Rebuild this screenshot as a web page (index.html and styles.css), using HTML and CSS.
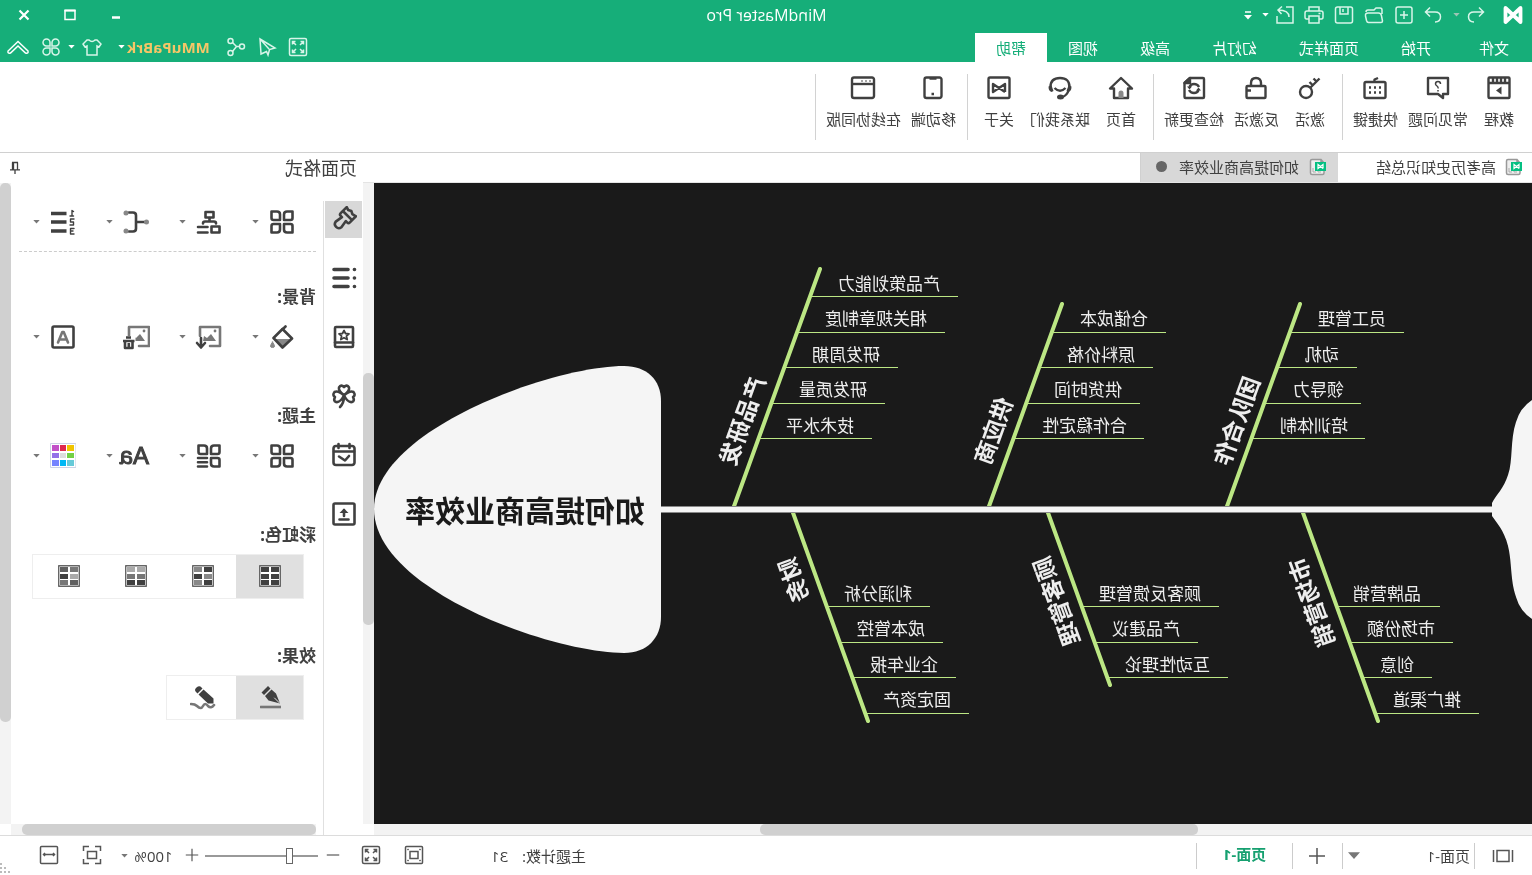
FILE: index.html
```html
<!DOCTYPE html>
<html lang="zh-CN">
<head>
<meta charset="utf-8">
<title>MindMaster Pro</title>
<link rel="stylesheet" href="styles.css">
</head>
<body>
<svg class="sprite" aria-hidden="true">
  <symbol id="caret" viewBox="0 0 8 5"><path d="M0 0h8L4 4.500z" fill="currentColor"/></symbol>
  <symbol id="logo" viewBox="0 0 22 20"><path d="M3.500 17V3l15 14V3l-15 14" fill="none" stroke="#fff" stroke-width="3.800" stroke-linejoin="round" stroke-linecap="round"/></symbol>
  <symbol id="undo" viewBox="0 0 20 20"><path d="M7 2.500L2.500 7 7 11.500M2.500 7H12c3.500 0 5.500 1.800 5.500 4.800S15.500 17 12 17"/></symbol>
  <symbol id="redo" viewBox="0 0 20 20"><path d="M13 2.500L17.500 7 13 11.500M17.500 7H8c-3.500 0-5.500 1.800-5.500 4.800S4.500 17 8 17"/></symbol>
  <symbol id="new" viewBox="0 0 20 20"><rect x="2" y="2" width="16" height="16" rx="2"/><path d="M10 6v8M6 10h8"/></symbol>
  <symbol id="folder" viewBox="0 0 20 20"><path d="M2 9V5q0-2 2-2h4l2 2h6q2 0 2 2M1.500 16l1-5q.5-3 3-3h10.500q3 0 2.500 3l-1 4.500q-.5 2-2 2H3q-1.500 0-1.500-1.500z"/></symbol>
  <symbol id="save" viewBox="0 0 20 20"><rect x="1.500" y="2" width="17" height="16" rx="2"/><path d="M6 2v7h8V2M11 4v3"/></symbol>
  <symbol id="print" viewBox="0 0 20 20"><path d="M5 6V2h10v4M5 14H2.500q-1.500 0-1.500-2V8q0-2 2-2h14q2 0 2 2v4q0 2-1.500 2H15M5 11h10v7H5zM3.500 8.500h2"/></symbol>
  <symbol id="export" viewBox="0 0 20 20"><path d="M9 2H2v16h16v-7M6 12c0-5 4-7 11-7M13 1.500L17 5l-3.500 4"/></symbol>
  <symbol id="quickbar" viewBox="0 0 8 10"><path d="M1 2h6" stroke="#fff" stroke-width="1.500"/><path d="M0 5h8L4 9.500z" fill="#fff"/></symbol>
  <symbol id="min" viewBox="0 0 14 14"><path d="M3 9.500h8" stroke-width="2.500"/></symbol>
  <symbol id="max" viewBox="0 0 14 14"><path d="M2 2.500h10v9H2z"/><path d="M1.500 2.500h11" stroke-width="2"/></symbol>
  <symbol id="close" viewBox="0 0 14 14"><path d="M2.500 2.500l9 9M11.500 2.500l-9 9" stroke-width="2.200"/></symbol>
  <symbol id="expand" viewBox="0 0 20 20"><rect x="1.500" y="1.500" width="17" height="17" rx="1.500"/><path d="M8 8L4.500 4.500M4.500 7.500v-3h3M12 8l3.500-3.500M12.500 4.500h3v3M8 12l-3.500 3.500M4.500 12.500v3h3M12 12l3.500 3.500M12.500 15.500h3v-3"/></symbol>
  <symbol id="send" viewBox="0 0 20 20"><path d="M17 2L2 11l5.500 1.500L9 18l1.500-3.500L16 17zM17 2L8 12"/></symbol>
  <symbol id="share" viewBox="0 0 20 20"><circle cx="4" cy="9.500" r="2.500"/><circle cx="15.500" cy="4" r="2.500"/><circle cx="15.500" cy="16" r="2.500"/><path d="M6.500 9.500h3l4-4M9.500 9.500l4 5"/></symbol>
  <symbol id="shirt" viewBox="0 0 20 20"><path d="M7 3q3 3 6 0l2 0 4 4-2 3-2-1v9H5V9l-2 1-2-3 4-4z"/></symbol>
  <symbol id="clover4" viewBox="0 0 20 20"><path d="M9 9H5.500A3.500 3.500 0 1 1 9 5.500zM11 9V5.500A3.500 3.500 0 1 1 14.500 9zM9 11v3.500A3.500 3.500 0 1 1 5.500 11zM11 11h3.500A3.500 3.500 0 1 1 11 14.500z"/></symbol>
  <symbol id="chevron" viewBox="0 0 24 20"><path d="M2 14l10-9.500L22 14q.5 3-2.500 2L12 9l-7.500 7Q1.500 17 2 14z"/></symbol>

  <symbol id="film" viewBox="0 0 24 24"><rect x="1.500" y="1.500" width="21" height="20.500" rx="1"/><path d="M2 7h20M6 2v5M10 2v5M14 2v5M18 2v5"/><path d="M9.500 10.500l5.500 4-5.500 4z" fill="currentColor" stroke="none"/></symbol>
  <symbol id="faq" viewBox="0 0 24 24"><path d="M2 2h20v16h-10l-5 4v-4H2z"/><path d="M9.500 8q0-2.500 2.500-2.500T14.500 8q0 1-1.500 2t-1 2.500M12 14v1.500" stroke-width="1.500"/></symbol>
  <symbol id="keyboard" viewBox="0 0 24 24"><rect x="1.500" y="6" width="21" height="16" rx="1.500"/><path d="M12.500 6V3.500L9 2M6 11.500h2M11 11.500h2M16 11.500h2M6 16.500h2M11 16.500h2M16 16.500h2"/></symbol>
  <symbol id="key" viewBox="0 0 24 24"><circle cx="16" cy="16" r="6"/><path d="M11.500 11.500L2.500 2.500M9 9.500l3.500-3.500M5 6l3.500-3.500"/></symbol>
  <symbol id="lock" viewBox="0 0 24 24"><rect x="2.500" y="10" width="19" height="12" rx="1"/><path d="M7 10V7q0-5 5-5t5 5v3M17 14.500h4"/></symbol>
  <symbol id="update" viewBox="0 0 24 24"><path d="M3 2h13l5.500 5v14q0 1-1 1H3q-1 0-1-1V3q0-1 1-1z"/><path d="M16 2v5h5.500z" fill="currentColor"/><path d="M7 11q1.500-3 5-3t4.500 3M17 14q-1.500 3-5 3t-4.500-3"/><path d="M14 10.500h5l-2.500 3zM5 14.500h5l-2.500-3z" fill="currentColor" stroke="none"/></symbol>
  <symbol id="home" viewBox="0 0 26 24"><path d="M2 12.500L13 2l11 10.500h-4V22H6v-9.500z"/><path d="M10.500 22v-5q0-2.500 2.500-2.500t2.500 2.500v5z" fill="#888" stroke="none"/></symbol>
  <symbol id="support" viewBox="0 0 26 24"><path d="M3.500 11q0-9 9.500-9t9.500 9M4 13q2 7 7 8M7.500 12q5.500 5.500 11 0"/><path d="M1.500 10.500l3-1 2 5.500-2 1q-3-1-3-5.500zM24.500 10.500l-3-1-2 5.500 2 1q3-1 3-5.500z" fill="currentColor" stroke="none"/><ellipse cx="12.500" cy="21" rx="3.500" ry="2.500" fill="currentColor" stroke="none"/></symbol>
  <symbol id="about" viewBox="0 0 24 24"><rect x="1.500" y="1.500" width="21" height="20.500" rx="1.500"/><path d="M6 16V8l12 8V8L6 16"/></symbol>
  <symbol id="phone" viewBox="0 0 24 24"><rect x="3.500" y="1.500" width="17" height="20.500" rx="2"/><path d="M8.500 2.500h7M11 18h2.500"/></symbol>
  <symbol id="browser" viewBox="0 0 26 24"><rect x="2" y="1.500" width="22" height="20.500" rx="2"/><path d="M2 8h22"/><path d="M5 5h2M9 5h2M13 5h2" stroke="#888" stroke-width="1.500"/></symbol>

  <symbol id="doc" viewBox="0 0 18 18"><path d="M6 1.500h9q1.500 0 1.500 1.500v12q0 1.500-1.500 1.500H4.500Q3 16.500 3 15V5zM6 1.500V5H3" fill="#eee" stroke="#999" stroke-width="1.500"/><path d="M6 14h3v-2M11 14h3v-4" fill="none" stroke="#aaa"/><rect x="1" y="4" width="11" height="9" fill="#05c082"/><path d="M4 10.500v-4l5 4v-4l-5 4" fill="none" stroke="#fff" stroke-width="1.200"/></symbol>
  <symbol id="pin" viewBox="0 0 12 14"><path d="M3 1.500h6M3.500 1.500v7M8.500 1.500v7M7.500 1.500v7M1 8.800h10M6 9v4"/></symbol>

  <symbol id="brush" viewBox="0 0 26 26"><g transform="translate(11 11) rotate(-45)"><path d="M-6.500-7.500l4 1 3-1.500 3 1.500 3-1V1q0 2-2 2H2.800l1.200 7.500Q3.500 14 0 14t-4-3.500L-2.800 3h-1.700q-2 0-2-2zM-6.500-2h13"/></g></symbol>
  <symbol id="outline" viewBox="0 0 26 26"><path d="M9 4.500h14M9 13h14M9 21.500h14M2.500 4.500h.1M2.500 13h.1M2.500 21.500h.1" stroke-width="3.600"/></symbol>
  <symbol id="album" viewBox="0 0 26 26"><rect x="4" y="3" width="18" height="20" rx="1"/><path d="M4 18.500h18"/><path d="M13 6.500l1.500 3 3.500.3-2.600 2.300.8 3.400-3.200-1.800-3.200 1.800.8-3.400L8 9.800l3.500-.3z" stroke-width="1.800"/></symbol>
  <symbol id="clover" viewBox="0 0 26 26"><path d="M13 12Q7 8 8 4.500 10 1 13 4q3-3 5 .5Q19 8 13 12zM13 12.500Q7 7 3.500 9 1 12 4 14q-2 4 1 5 4 1 8-6.500zM13 12.500Q19 7 22.500 9 25 12 22 14q2 4-1 5-4 1-8-6.500zM13 13q0 7 4 11"/></symbol>
  <symbol id="calendar" viewBox="0 0 26 26"><rect x="2.500" y="4" width="21" height="19" rx="2.500"/><path d="M3 9.500h20M7.500 2v4M18.500 2v4M8 14l4 4.500 6-4"/></symbol>
  <symbol id="upload" viewBox="0 0 26 26"><rect x="2.500" y="2.500" width="21" height="21" rx="1.500"/><path d="M13 15V9M8.500 18.500h9"/><path d="M8.500 12L13 7.500l4.500 4.500z" fill="currentColor" stroke="none"/></symbol>

  <symbol id="layout4" viewBox="0 0 26 26"><path d="M2.500 2.500H8q3 0 3 3V11H4.500q-2 0-2-2zM23.500 2.500H18q-3 0-3 3V11h6.500q2 0 2-2zM2.500 23.500V17q0-2 2-2H11v5.500q0 3-3 3zM15 15h6.500q2 0 2 2v6.500H18q-3 0-3-3z"/></symbol>
  <symbol id="structure" viewBox="0 0 26 26"><rect x="8.500" y="3" width="8" height="5.500"/><path d="M12.500 9v3M6 14.500q0-2 2-2h9q2 0 2 2"/><rect x="2.500" y="17.500" width="8" height="6"/><path d="M14.500 18h9.500M14.500 23.500h9.500"/></symbol>
  <symbol id="connector" viewBox="0 0 26 26"><path d="M2 13h10M20 3.500h-4q-3 0-3 3v13q0 3 3 3h4"/><g fill="#888" stroke="none"><circle cx="2.500" cy="13" r="2.500"/><circle cx="23" cy="4" r="2.500"/><circle cx="23" cy="22" r="2.500"/></g></symbol>
  <symbol id="numbering" viewBox="0 0 26 26"><path d="M9.500 4.500H25M9.500 13H25M9.500 22H25" stroke-width="3.600" stroke-linecap="butt"/><path d="M2.500 2.500L4 1.500V7M2.500 7H6M2 10h3.500v3H2.500v3H6M2 19.500h3.500V25H2M3 22h2.500" stroke-width="1.400"/></symbol>
  <symbol id="bucket" viewBox="0 0 26 26"><path d="M9.500 2.500l3 3"/><path d="M5 15h16l-8 8z" fill="#888" stroke="none"/><path d="M12.500 5L3 14.500l9.500 9 9-9.500z"/><path d="M22.500 18q4 5.500 0 5.500t0-5.500z" fill="#888" stroke="#888" stroke-width="1"/></symbol>
  <symbol id="picture" viewBox="0 0 28 26"><path d="M13 22H3V3h20v9" stroke="#777"/><path d="M7 17l5-7 4 4 3-2 1 5z" fill="#777" stroke="none"/><circle cx="8" cy="7" r="1.400" fill="#777" stroke="none"/></symbol>
  <symbol id="setpic" viewBox="0 0 28 26"><use href="#picture" width="28" height="26"/><path d="M22 14v9M18 19l4 4.500 4-4.500"/></symbol>
  <symbol id="delpic" viewBox="0 0 28 26"><use href="#picture" x="-2" width="28" height="26"/><path d="M14.500 12H28v14H14.500z" fill="#fff" stroke="none"/><path d="M15.500 17H27M19 13.500h5M17.500 18v6H25v-6M21.200 19v4" stroke-linecap="butt"/></symbol>
  <symbol id="watermark" viewBox="0 0 26 26"><rect x="2.500" y="2.500" width="21" height="21" rx="1.500"/><path d="M8 18.500L12.300 8h1.400L18 18.500M9.500 15.500h7" stroke="#777"/></symbol>
  <symbol id="themelist" viewBox="0 0 26 26"><path d="M2.500 2.500H8q3 0 3 3V11H4.500q-2 0-2-2zM23.500 2.500H18q-3 0-3 3V11h6.500q2 0 2-2zM2.500 23.500V17q0-2 2-2H11v5.500q0 3-3 3zM15 15h9M15 19.200h9M15 23.500h9"/></symbol>
  <symbol id="palette" viewBox="0 0 26 26"><rect x=".5" y=".5" width="25" height="24" fill="#fff" stroke="#ccd3e6" stroke-width="1"/><g stroke="none"><path fill="#f0c400" d="M2 2h7v6H2z"/><path fill="#e0284e" d="M10 2h6v6h-6z"/><path fill="#c250c8" d="M17 2h7v6h-7z"/><path fill="#72d045" d="M2 10h7v5H2z"/><path fill="#ddd" d="M10 10h6v5h-6z"/><path fill="#9370e8" d="M17 10h7v5h-7z"/><path fill="#66cad8" d="M2 17h7v6H2z"/><path fill="#00b8f5" d="M10 17h6v6h-6z"/><path fill="#7684ff" d="M17 17h7v6h-7z"/></g></symbol>
  <symbol id="rain1" viewBox="0 0 22 22"><rect x=".7" y=".7" width="20.600" height="20.600" fill="#fff" stroke="#666" stroke-width="1.400"/><path d="M2 2h8v5H2zM12 2h8v5h-8zM2 9h8v5H2zM12 9h8v5h-8zM2 15h8v5H2zM12 15h8v5h-8z" fill="#404040" stroke="none"/></symbol>
  <symbol id="rain2" viewBox="0 0 22 22"><rect x=".7" y=".7" width="20.600" height="20.600" fill="#fff" stroke="#666" stroke-width="1.400"/><path d="M2 2h8v5H2zM12 9h8v5h-8zM2 15h8v5H2z" fill="#404040" stroke="none"/><path d="M12 2h8v5h-8zM2 9h8v5H2zM12 15h8v5h-8z" fill="#888" stroke="none"/></symbol>
  <symbol id="rain3" viewBox="0 0 22 22"><rect x=".7" y=".7" width="20.600" height="20.600" fill="#fff" stroke="#666" stroke-width="1.400"/><path d="M2 2h8v5H2zM12 2h8v5h-8z" fill="#aaa" stroke="none"/><path d="M2 9h8v5H2zM12 9h8v5h-8z" fill="#777" stroke="none"/><path d="M2 15h8v5H2zM12 15h8v5h-8z" fill="#404040" stroke="none"/></symbol>
  <symbol id="rain4" viewBox="0 0 22 22"><rect x=".7" y=".7" width="20.600" height="20.600" fill="#fff" stroke="#666" stroke-width="1.400"/><path d="M2 2h8v5H2zM12 15h8v5h-8z" fill="#777" stroke="none"/><path d="M2 9h8v5H2z" fill="#aaa" stroke="none"/><path d="M12 2h8v5h-8zM2 15h8v5H2z" fill="#606060" stroke="none"/><path d="M12 9h8v5h-8z" fill="#404040" stroke="none"/></symbol>
  <symbol id="pen" viewBox="0 0 26 26"><path d="M2 23h21" stroke="#777" stroke-linecap="butt"/><path d="M15 2l6.500 6.500L19 11l-6.500-6.500zM11.500 5.500L18 12l-3.500 4.500L3 19.500l4-10z" fill="currentColor" stroke="none"/><path d="M3.500 19l5-5" stroke="#e0e0e0" stroke-width="1"/></symbol>
  <symbol id="pencil" viewBox="0 0 26 26"><path d="M2 21q3 4 6 1 3-4 5 0t6 0q2-2 6-2" stroke="#777"/><path d="M14.500 3.500q2-2.500 5 0t0 5l-1 1-5-5zM12.500 5.500l5 5L8 19.500H2.500v-5z" fill="currentColor" stroke="none"/></symbol>

  <symbol id="slides" viewBox="0 0 22 16"><rect x="5" y="2.500" width="12" height="11"/><path d="M1.500 2v12M20.500 2v12"/></symbol>
  <symbol id="plus" viewBox="0 0 18 18"><path d="M9 1v16M1 9h16"/></symbol>
  <symbol id="minus" viewBox="0 0 18 18"><path d="M1 9h16"/></symbol>
  <symbol id="fitpage" viewBox="0 0 20 20"><rect x="1.500" y="1.500" width="17" height="17" rx="1"/><rect x="6" y="6.500" width="8" height="7"/><path d="M3.500 4l1 1M16.500 4l-1 1M3.500 16l1-1M16.500 16l-1-1"/></symbol>
  <symbol id="center" viewBox="0 0 20 20"><path d="M1.500 6V1.500H7M13 1.500h5.500V6M18.500 14v4.500H13M7 18.500H1.500V14"/><rect x="5.500" y="6.500" width="9" height="7"/></symbol>
  <symbol id="fitwidth" viewBox="0 0 20 20"><rect x="1.500" y="1.500" width="17" height="17" rx="1"/><path d="M4.500 9.500h11M6 8l-1.500 1.500L6 11M14 8l1.500 1.500L14 11"/></symbol>
</svg>

<div class="app">
  <header class="titlebar">
    <div class="quick">
      <svg class="logo"><use href="#logo"/></svg>
      <button class="tool undo" aria-label="撤销"><svg><use href="#undo"/></svg></button>
      <button class="drop dim" aria-label="撤销列表"><svg><use href="#caret"/></svg></button>
      <button class="tool redo" aria-label="重做"><svg><use href="#redo"/></svg></button>
      <button class="tool" aria-label="新建"><svg><use href="#new"/></svg></button>
      <button class="tool" aria-label="打开"><svg><use href="#folder"/></svg></button>
      <button class="tool" aria-label="保存"><svg><use href="#save"/></svg></button>
      <button class="tool" aria-label="打印"><svg><use href="#print"/></svg></button>
      <button class="tool last" aria-label="导出"><svg><use href="#export"/></svg></button>
      <button class="drop" aria-label="导出列表"><svg><use href="#caret"/></svg></button>
      <button class="drop custom" aria-label="自定义"><svg class="quickbar"><use href="#quickbar"/></svg></button>
    </div>
    <h1 class="apptitle">MindMaster Pro</h1>
    <div class="winbtns">
      <button aria-label="最小化"><svg><use href="#min"/></svg></button>
      <button aria-label="最大化"><svg><use href="#max"/></svg></button>
      <button aria-label="关闭"><svg><use href="#close"/></svg></button>
    </div>
  </header>

  <nav class="menubar">
    <div class="menus">
      <button class="menu file">文件</button>
      <button class="menu">开始</button>
      <button class="menu">页面样式</button>
      <button class="menu">幻灯片</button>
      <button class="menu">高级</button>
      <button class="menu">视图</button>
      <button class="menu active">帮助</button>
    </div>
    <div class="account">
      <button class="tool" aria-label="全屏"><svg><use href="#expand"/></svg></button>
      <button class="tool" aria-label="发送"><svg><use href="#send"/></svg></button>
      <button class="tool" aria-label="分享"><svg><use href="#share"/></svg></button>
      <button class="user">MMuPaBrk<svg class="caret"><use href="#caret"/></svg></button>
      <button class="tool" aria-label="皮肤"><svg><use href="#shirt"/></svg></button>
      <button class="drop" aria-label="皮肤列表"><svg><use href="#caret"/></svg></button>
      <button class="tool apps" aria-label="应用"><svg><use href="#clover4"/></svg></button>
      <button class="tool collapse" aria-label="收起功能区"><svg><use href="#chevron"/></svg></button>
    </div>
  </nav>

  <section class="ribbon">
    <div class="group">
      <button><svg><use href="#film"/></svg>教程</button>
      <button><svg><use href="#faq"/></svg>常见问题</button>
      <button><svg><use href="#keyboard"/></svg>快捷键</button>
    </div>
    <div class="group">
      <button><svg><use href="#key"/></svg>激活</button>
      <button><svg><use href="#lock"/></svg>反激活</button>
      <button><svg><use href="#update"/></svg>检查更新</button>
    </div>
    <div class="group">
      <button><svg><use href="#home"/></svg>首页</button>
      <button><svg><use href="#support"/></svg>联系我们</button>
      <button><svg><use href="#about"/></svg>关于</button>
    </div>
    <div class="group">
      <button><svg><use href="#phone"/></svg>移动端</button>
      <button><svg><use href="#browser"/></svg>在线协同版</button>
    </div>
  </section>

  <main class="work">
    <section class="docs">
      <div class="doctabs">
        <button class="doctab"><svg><use href="#doc"/></svg>高考历史知识总结</button>
        <button class="doctab active"><svg><use href="#doc"/></svg>如何提高商业效率<span class="dirty"></span></button>
      </div>
      <div class="stage">
        <div class="canvas">
          <svg class="map" viewBox="0 183 1158 641" width="1158" height="641">
            <path class="paper" d="M0 400Q12 408 16 422C22 440 19 460 24 475 28 488 36 495 40 503V516C36 522 28 530 24 546 20 562 22 580 16 597Q12 611 0 619z"/>
            <path class="paper" d="M871 401C871 380 885 366 908 366 980 366 1158 430 1158 509 1158 590 980 653 908 653 885 653 871 638 871 617z"/>
            <g class="bone">
              <path d="M232 304L306 509M470 304L544 509M712 269L799 509M230 510L154 721M485 510L422 685M740 510L664 721"/>
            </g>
            <path class="spine-edge" d="M40 509.500H871"/>
            <path class="spine" d="M38 509.500H873"/>
            <g class="twig">
              <path d="M128 332.500H241M175 367.500H253M171 403.500H266M167 438.500H279"/>
              <path d="M366 332.500H479M379 367.500H491M392 403.500H504M388 438.500H517"/>
              <path d="M574 296.500H721M587 332.500H734M634 367.500H746M647 403.500H759M660 438.500H772"/>
              <path d="M92 606.500H195M79 642.500H182M100 677.500H169M53 713.500H156"/>
              <path d="M313 606.500H450M334 642.500H437M304 677.500H424"/>
              <path d="M602 606.500H705M589 642.500H692M576 677.500H679M563 713.500H666"/>
            </g>
            <g class="topic">
              <text x="146" y="325">员工管理</text><text x="193" y="361">动机</text><text x="188" y="396">领导力</text><text x="184" y="432">培训体制</text>
              <text x="384" y="325">仓储成本</text><text x="397" y="361">原料价格</text><text x="410" y="396">供货时间</text><text x="405" y="432">合作稳定性</text>
              <text x="592" y="290">产品策划能力</text><text x="605" y="325">相关规章制度</text><text x="652" y="361">研发周期</text><text x="665" y="396">研发质量</text><text x="678" y="432">技术水平</text>
              <text x="111" y="600">品牌营销</text><text x="97" y="635">市场份额</text><text x="118" y="671">创意</text><text x="71" y="706">推广渠道</text>
              <text x="331" y="600">顾客反馈管理</text><text x="352" y="635">产品建议</text><text x="322" y="671">互动性理论</text>
              <text x="620" y="600">利润分析</text><text x="607" y="635">成本管控</text><text x="594" y="671">企业年报</text><text x="581" y="706">固定资产</text>
            </g>
            <g class="branch">
              <text transform="translate(295 421) rotate(70)" y="8">团队合作</text>
              <text transform="translate(538 431) rotate(70)" y="8">供应商</text>
              <text transform="translate(789 421) rotate(70)" y="8">产品研发</text>
              <text transform="translate(220 602) rotate(110)" y="8">市场营销</text>
              <text transform="translate(475 601) rotate(110)" y="8">顾客管理</text>
              <text transform="translate(738 580) rotate(110)" y="8">财务</text>
            </g>
            <text class="root" x="887" y="522">如何提高商业效率</text>
          </svg>
        </div>
        <div class="vscroll mapv"><i></i></div>
        <div class="hscroll maph"><i></i></div>
      </div>
    </section>

    <aside class="panel">
      <div class="panelhead"><h2>页面格式</h2><button aria-label="固定面板"><svg><use href="#pin"/></svg></button></div>
      <div class="panelbody">
        <div class="side">
          <button class="active" aria-label="页面格式"><svg><use href="#brush"/></svg></button>
          <button aria-label="大纲"><svg><use href="#outline"/></svg></button>
          <button aria-label="图标"><svg><use href="#album"/></svg></button>
          <button aria-label="剪贴画"><svg><use href="#clover"/></svg></button>
          <button aria-label="任务"><svg><use href="#calendar"/></svg></button>
          <button aria-label="附件"><svg><use href="#upload"/></svg></button>
        </div>
        <div class="format">
          <div class="row first">
            <button aria-label="布局"><svg><use href="#layout4"/></svg><svg class="caret"><use href="#caret"/></svg></button>
            <button aria-label="结构"><svg><use href="#structure"/></svg><svg class="caret"><use href="#caret"/></svg></button>
            <button aria-label="连接线"><svg><use href="#connector"/></svg><svg class="caret"><use href="#caret"/></svg></button>
            <button aria-label="编号"><svg><use href="#numbering"/></svg><svg class="caret"><use href="#caret"/></svg></button>
          </div>
          <h3>背景:</h3>
          <div class="row">
            <button aria-label="背景颜色"><svg><use href="#bucket"/></svg><svg class="caret"><use href="#caret"/></svg></button>
            <button aria-label="背景图片"><svg class="wide"><use href="#setpic"/></svg><svg class="caret"><use href="#caret"/></svg></button>
            <button aria-label="移除图片"><svg class="wide"><use href="#delpic"/></svg></button>
            <button aria-label="水印"><svg><use href="#watermark"/></svg><svg class="caret"><use href="#caret"/></svg></button>
          </div>
          <h3>主题:</h3>
          <div class="row">
            <button aria-label="主题"><svg><use href="#layout4"/></svg><svg class="caret"><use href="#caret"/></svg></button>
            <button aria-label="主题样式"><svg><use href="#themelist"/></svg><svg class="caret"><use href="#caret"/></svg></button>
            <button class="fonts"><span>Aa</span><svg class="caret"><use href="#caret"/></svg></button>
            <button aria-label="主题颜色"><svg><use href="#palette"/></svg><svg class="caret"><use href="#caret"/></svg></button>
          </div>
          <h3>彩虹色:</h3>
          <div class="seg rainbow">
            <button class="active" aria-label="单色"><svg><use href="#rain1"/></svg></button>
            <button aria-label="彩虹一"><svg><use href="#rain2"/></svg></button>
            <button aria-label="彩虹二"><svg><use href="#rain3"/></svg></button>
            <button aria-label="彩虹三"><svg><use href="#rain4"/></svg></button>
          </div>
          <h3 class="effect">效果:</h3>
          <div class="seg">
            <button class="active" aria-label="标准"><svg class="big"><use href="#pen"/></svg></button>
            <button aria-label="手绘"><svg class="big"><use href="#pencil"/></svg></button>
          </div>
          <div class="hscroll panelh"><i></i></div>
        </div>
        <div class="vscroll panelv"><i></i></div>
      </div>
    </aside>
  </main>

  <footer class="status">
    <button class="slidebtn" aria-label="页面列表"><svg><use href="#slides"/></svg></button>
    <button class="pagesel"><span>页面-1</span><svg><use href="#caret"/></svg></button>
    <button class="addpage" aria-label="新建页面"><svg><use href="#plus"/></svg></button>
    <button class="pagetab">页面-1</button>
    <p class="count"><span>主题计数:</span><span>31</span></p>
    <div class="zoom">
      <button aria-label="适合页面"><svg><use href="#fitpage"/></svg></button>
      <button class="full" aria-label="全屏显示"><svg><use href="#expand"/></svg></button>
      <button class="step" aria-label="缩小"><svg><use href="#minus"/></svg></button>
      <input type="range" min="0" max="100" value="24" aria-label="缩放">
      <button class="step" aria-label="放大"><svg><use href="#plus"/></svg></button>
      <button class="percent">100%<svg class="caret"><use href="#caret"/></svg></button>
      <button aria-label="居中"><svg><use href="#center"/></svg></button>
      <button class="fitw" aria-label="适合宽度"><svg><use href="#fitwidth"/></svg></button>
    </div>
    <svg class="grip" viewBox="0 0 12 12"><path d="M10 0h2v2h-2zM6 4h2v2H6zM10 4h2v2h-2zM2 8h2v2H2zM6 8h2v2H6zM10 8h2v2h-2z"/></svg>
  </footer>
</div>
</body>
</html>
```

FILE: styles.css
```css
* { box-sizing: border-box; }

html, body { height: 100%; margin: 0; }

body {
  overflow: hidden;
  font-family: "Open Sans", "Noto Sans CJK SC", sans-serif;
  font-size: 15px;
  line-height: 20px;
  color: #404040;
  background: #fff;
}

button {
  margin: 0;
  padding: 0;
  border: 0;
  background: none;
  color: inherit;
  font: inherit;
  white-space: nowrap;
}

h1, h2, h3, p { margin: 0; font-weight: 400; }

svg { display: block; flex: none; }

.sprite { position: absolute; width: 0; height: 0; }

/* The whole window is shown as in a mirror */
.app {
  display: flex;
  flex-direction: column;
  height: 100%;
  transform: scaleX(-1);
}

/* Title bar */
.titlebar {
  display: flex;
  justify-content: space-between;
  align-items: center;
  height: 31px;
  padding-bottom: 1px;
  background: #16ae79;
  color: #fff;
}

.titlebar svg, .account svg {
  width: 20px;
  height: 20px;
  fill: none;
  stroke: #d8f5e9;
  stroke-width: 1.500;
}

.quick, .account { display: flex; align-items: center; }
.quick { flex: 1; }
.quick .logo { width: 22px; height: 20px; margin: 0 15px 0 8px; }
.tool { width: 30px; display: flex; justify-content: center; }
.undo { width: 22px; }
.drop { width: 10px; display: flex; justify-content: center; }
.quick .drop { margin: 0; }
.quick .dim { margin: 0 4px 0 3px; color: #9cc5b4; }
.quick .redo { width: 29px; }
.quick .last { width: 28px; }
.titlebar .drop svg, .account .drop svg, .account .caret { width: 7px; height: 4px; stroke: none; }
.quick .custom { margin-left: 8px; }
.titlebar .drop .quickbar { width: 8px; height: 10px; }
.apptitle { font-size: 16px; }

.winbtns { flex: 1; display: flex; justify-content: flex-end; padding-right: 1px; }
.winbtns button { width: 46px; display: flex; justify-content: center; }
.titlebar .winbtns svg { width: 14px; height: 14px; stroke: #fff; }

/* Menu bar */
.menubar {
  display: flex;
  justify-content: space-between;
  height: 31px;
  padding-top: 2px;
  background: #16ae79;
  color: #fff;
}

.menus { display: flex; }
.menu { padding: 0 21px; }
.file { margin: 0 6px 0 2px; }
.menu.active { background: #fff; color: #16ae79; }

.account { padding-right: 1px; height: 28px; }
.account .tool { width: 31px; }
.user {
  display: flex;
  align-items: center;
  gap: 2px;
  margin: 0 10px 0 11px;
  color: #f6c667;
  font-weight: 700;
}
.user .caret { color: #fff; }
.account .apps { width: 32px; }
.account .collapse { width: 34px; }
.account .collapse svg { width: 24px; stroke: #fff; }

/* Ribbon */
.ribbon {
  display: flex;
  height: 91px;
  padding: 12px 0 12px 1px;
  border-bottom: 1px solid #d0d0d0;
}

.group {
  display: flex;
  height: 66px;
  padding: 0 5px 0 6px;
  border-right: 1px solid #d2d2d2;
}

.group button {
  display: flex;
  flex-direction: column;
  align-items: center;
  gap: 9px;
  min-width: 52px;
  padding: 2px 5px;
}

.group svg {
  width: 26px;
  height: 24px;
  fill: none;
  stroke: currentColor;
  stroke-width: 2.400;
  stroke-linejoin: round;
}

/* Documents */
.work { display: flex; flex: 1; min-height: 0; }
.docs { display: flex; flex: 1; flex-direction: column; min-width: 0; }

.doctabs { display: flex; height: 30px; border-bottom: 1px solid #e4e4e4; }
.doctab {
  display: flex;
  align-items: center;
  gap: 9px;
  padding: 0 38px 2px 9px;
}
.doctab svg { width: 18px; height: 18px; }
.doctab.active {
  gap: 10px;
  padding-left: 11px;
  padding-right: 15px;
  background: #d8d8d8;
  border-right: 1px solid #d0d0d0;
}
.dirty { width: 11px; height: 11px; margin-left: 2px; border-radius: 50%; background: #666; }

.stage {
  display: grid;
  flex: 1;
  grid-template: minmax(0, 1fr) 11px / minmax(0, 1fr) 11px;
  min-height: 0;
}

.canvas { overflow: hidden; background: #1a1a1a; }
.paper { fill: #f5f5f5; }
.spine-edge { stroke: #888; stroke-width: 7; }
.spine { stroke: #f5f5f5; stroke-width: 5; }
.bone { fill: none; stroke: #bce784; stroke-width: 4; stroke-linecap: round; }
.twig { stroke: #bce784; stroke-width: 1; }
.topic { font-size: 17px; fill: #eee; }
.branch { font-size: 23px; font-weight: 700; fill: #eee; text-anchor: middle; }
.root { font-size: 30px; font-weight: 700; fill: #1a1a1a; }

.vscroll, .hscroll { display: grid; flex: none; background: #f3f3f3; }
.vscroll i { grid-row: 2; border-radius: 5px; background: #d0d0d0; }
.hscroll i { grid-column: 2; border-radius: 5px; background: #d0d0d0; }
.mapv { grid-template-rows: 190fr 252fr 199fr; }
.maph { grid-template-columns: 334fr 438fr 386fr; }

/* Format panel */
.panel { display: flex; flex: none; flex-direction: column; width: 363px; }

.panelhead {
  display: flex;
  justify-content: space-between;
  align-items: center;
  height: 30px;
  padding: 0 9px 0 6px;
}
.panelhead h2 { font-size: 18px; line-height: 24px; }
.panelhead svg { width: 12px; height: 14px; fill: none; stroke: #404040; stroke-width: 1.300; }

.panelbody { display: flex; flex: 1; min-height: 0; }

.side { display: flex; flex: none; flex-direction: column; gap: 22px; padding: 18px 1px 0; }
.side button {
  display: flex;
  align-items: center;
  justify-content: center;
  width: 37px;
  height: 37px;
  padding: 0 1px 1px 0;
}
.side .active { background: #d8d8d8; }

.side svg, .row svg, .seg svg {
  width: 26px;
  height: 26px;
  fill: none;
  stroke: currentColor;
  stroke-width: 2.600;
  stroke-linejoin: round;
  stroke-linecap: round;
}

.format {
  display: flex;
  flex: 1;
  flex-direction: column;
  align-items: flex-start;
  min-width: 0;
  margin-top: 18px;
  padding: 7px 0 0 7px;
  border-left: 1px solid #e0e0e0;
}

.row { display: grid; grid-template-columns: repeat(4, 73px); padding-left: 21px; height: 28px; }
.row button { display: flex; align-items: center; gap: 10px; }
.row .wide { width: 28px; margin: 0 -1px; }
.row .caret, .status .caret { width: 7px; height: 4px; stroke: none; color: #777; }
.row.first { height: 44px; padding-bottom: 16px; width: 297px; border-bottom: 1px dashed #ccc; }

.format h3 { margin: 33px 0 14px; font-size: 17px; line-height: 24px; font-weight: 700; }
.row + h3 { margin-top: 53px; }
.row.first + h3 { margin-top: 33px; }
.format h3:has(+ .seg) { margin-bottom: 7px; }
.format .effect { margin-top: 45px; }
.fonts span { width: 26px; font-family: "Liberation Sans", sans-serif; font-size: 24px; -webkit-text-stroke: 1px #404040; }

.seg { display: flex; height: 45px; margin-left: 12px; padding-right: 2px; border: 1px solid #eee; }
.seg button { display: flex; align-items: center; justify-content: center; width: 67px; padding: 0 1px 1px 0; }
.seg .active { background: #e0e0e0; }
.seg svg { width: 22px; height: 22px; }
.seg .big { width: 26px; height: 26px; }

.panelh { width: 100%; height: 11px; margin-top: auto; grid-template-columns: 0 294fr 11fr; }
.panelv { width: 11px; margin-bottom: 11px; grid-template-rows: 0 539fr 102fr; }

/* Status bar */
.status {
  position: relative;
  display: flex;
  align-items: center;
  height: 40px;
  border-top: 1px solid #dcdcdc;
}
.status svg { width: 20px; height: 20px; fill: none; stroke: #555; stroke-width: 1.500; }
.status button { display: flex; align-items: center; justify-content: center; height: 26px; }
.status .slidebtn { width: 58px; border-right: 1px solid #ccc; }
.status .slidebtn svg { width: 22px; height: 16px; }
.status .pagesel { width: 132px; padding: 0 5px 0 4px; justify-content: space-between; border-right: 1px solid #ccc; }
.status .pagesel svg { width: 12px; height: 8px; color: #777; stroke: none; }
.status .addpage { width: 50px; border-right: 1px solid #ccc; }
.addpage svg, .step svg { width: 18px; height: 18px; }
.status .pagetab { width: 96px; padding-bottom: 3px; color: #16a070; font-weight: 700; border-right: 1px solid #ccc; }
.count { display: flex; gap: 14px; margin-left: auto; }

.zoom { display: flex; align-items: center; margin: 0 39px 0 67px; }
.zoom button { width: 20px; padding-bottom: 2px; }
.zoom .full { margin: 0 18px 0 23px; }
.zoom .step svg { width: 14px; height: 14px; }
.zoom .percent { width: 54px; gap: 6px; margin-left: 8px; padding: 0; }
.zoom .percent + button { margin: 0 23px 0 18px; }

.zoom input {
  appearance: none;
  width: 113px;
  height: 16px;
  margin: 0 3px 0 5px;
  background: linear-gradient(#999, #999) center / 100% 2px no-repeat;
}
.zoom input::-webkit-slider-thumb {
  appearance: none;
  width: 7px;
  height: 16px;
  border: 1px solid #666;
  background: #fff;
}

.grip { position: absolute; right: 0; bottom: 0; }
.status .grip { width: 12px; height: 12px; fill: #bbb; stroke: none; }
```
